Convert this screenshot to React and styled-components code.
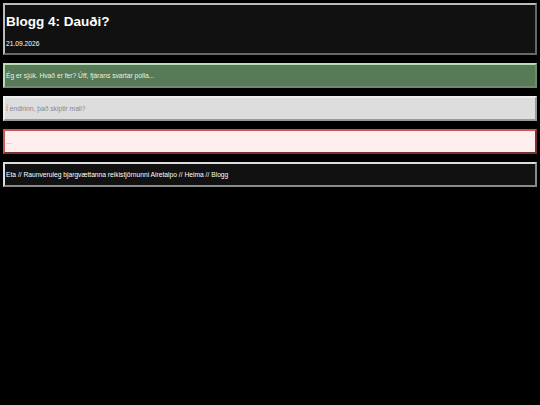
import React from 'react'
import styled, {createGlobalStyle} from 'styled-components'

const Global = createGlobalStyle`
  html, body {
    background: #000;
  }
  body {
    margin: 3px;
    font-family: "Liberation Sans", Arial, sans-serif;
    color: #fff;
  }
`

const Box = styled.div`
  border: 2px outset ${props => props.edge};
  background: ${props => props.bg};
  color: ${props => props.fg || '#fff'};
  padding: ${props => props.pad || '6px 1px'};
  margin-bottom: 8px;
  font-size: 6.7px;
  line-height: 9px;
`

const Title = styled.h1`
  font-size: 13.5px;
  line-height: 20px;
  margin: 0 0 7px;
`

const Date = styled.div`
  font-size: 6.7px;
  line-height: 10px;
`

const App = () => {
    return (
        <>
            <Global/>
            <Box bg="#111" edge="#bbb" pad="7px 1px 4px">
                <Title>Blogg 4: Dauði?</Title>
                <Date>21.09.2026</Date>
            </Box>
            <Box bg="#577a57" edge="#b9dcb9" fg="#e8f2e8">
                Ég er sjúk. Hvað er fer? Úff, fjárans svartar polla...
            </Box>
            <Box bg="#dddddd" edge="#eeeeee" fg="#888">
                Í endirinn, það skiptir mali?
            </Box>
            <Box bg="#ffeeee" edge="#cc5555" fg="#888">
                ...
            </Box>
            <Box bg="#111" edge="#dddddd">
                Eta // Raunveruleg bjargvættanna reikistjörnunni Airetalpo // Heima // Blogg
            </Box>
        </>
    )
}

export default App
